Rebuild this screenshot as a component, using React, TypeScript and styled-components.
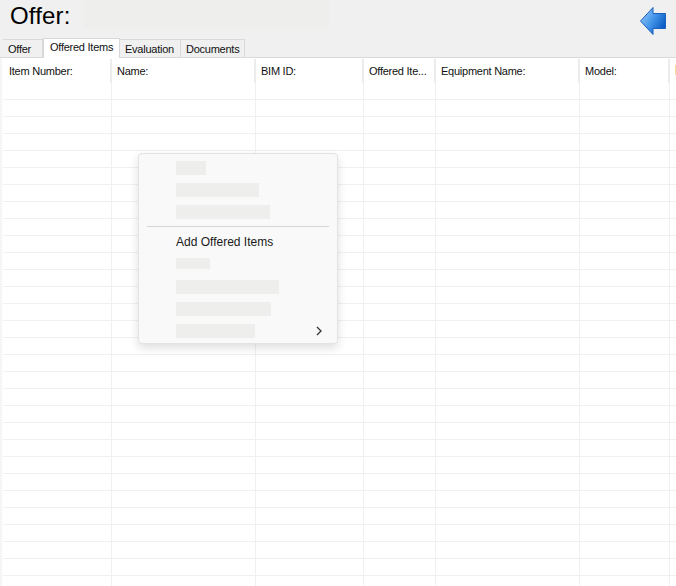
import React from "react";
import styled, { createGlobalStyle } from "styled-components";

const GlobalStyle = createGlobalStyle`
  html, body {
    margin: 0;
    padding: 0;
    background: #ffffff;
    overflow: hidden;
  }
`;

const COLUMN_WIDTHS = [109, 144, 108, 72, 144, 90, 60];
const ROW_COUNT = 30;

const columns = [
  "Item Number:",
  "Name:",
  "BIM ID:",
  "Offered Ite...",
  "Equipment Name:",
  "Model:",
];

const upperMenuItems = [
  { width: 30, height: 14, gap: 8 },
  { width: 83, height: 14, gap: 8 },
  { width: 94, height: 14, gap: 0 },
];

const lowerMenuItems = [
  { width: 34, height: 11, gap: 11 },
  { width: 103, height: 14, gap: 8 },
  { width: 95, height: 14, gap: 8 },
  { width: 79, height: 14, gap: 0, arrow: true },
];

const Page = styled.div`
  position: relative;
  width: 676px;
  height: 586px;
  overflow: hidden;
  background: #ffffff;
  font-family: "Liberation Sans", Arial, sans-serif;
`;

const Header = styled.header`
  display: flex;
  align-items: flex-start;
  justify-content: space-between;
  height: 39px;
  background: #f0f0f0;
`;

const TitleGroup = styled.div`
  display: flex;
  align-items: flex-start;
`;

const Title = styled.h1`
  margin: 0;
  width: 84px;
  padding: 2px 0 0 10px;
  box-sizing: border-box;
  font-size: 24px;
  line-height: 28px;
  font-weight: 400;
  letter-spacing: 0.15px;
  color: #000000;
`;

const RedactedTitle = styled.div`
  width: 245px;
  height: 29px;
  background: #eeeeed;
`;

const BackArrow = styled.svg`
  width: 28px;
  height: 30px;
  margin: 6px 9px 0 0;
`;

const TabStrip = styled.div`
  display: flex;
  align-items: flex-end;
  height: 18px;
  padding-left: 3px;
  background: #f0f0f0;
  border-bottom: 1px solid #dadada;
`;

const Tab = styled.div<{ $active?: boolean; $width: number }>`
  position: relative;
  z-index: ${({ $active }) => ($active ? 1 : 0)};
  width: ${({ $width }) => $width}px;
  height: ${({ $active }) => ($active ? 20 : 18)}px;
  margin-bottom: ${({ $active }) => ($active ? -1 : 0)}px;
  padding-left: ${({ $active }) => ($active ? 6 : 5)}px;
  box-sizing: border-box;
  border: 1px solid #d9d9d9;
  border-bottom: none;
  border-left-width: ${({ $active }) => ($active ? 1 : 0)}px;
  background: ${({ $active }) => ($active ? "#ffffff" : "#f0f0f0")};
  font-size: 11px;
  letter-spacing: -0.25px;
  line-height: ${({ $active }) => ($active ? 17 : 18)}px;
  color: #111111;
  white-space: nowrap;
`;

const Table = styled.div`
  padding-left: 1px;
  border-left: 2px solid #f5f5f5;
`;

const HeaderRow = styled.div`
  display: flex;
  height: 24px;
  margin-left: 1px;
  padding-top: 1px;
`;

const HeaderCell = styled.div<{ $width: number }>`
  flex: 0 0 ${({ $width }) => $width}px;
  box-sizing: border-box;
  padding: 5px 0 0 5px;
  border-right: 2px solid #ececec;
  font-size: 11px;
  letter-spacing: -0.25px;
  line-height: 14px;
  color: #111111;
  white-space: nowrap;
  overflow: hidden;
`;

const ClippedHeading = styled.div`
  width: 2px;
  height: 10px;
  margin-top: 1px;
  background: #f8dc94;
`;

const BodyRow = styled.div`
  display: flex;
  height: 17px;
  box-sizing: border-box;
  border-bottom: 1px solid #f0f0f0;
`;

const BodyCell = styled.div<{ $width: number }>`
  flex: 0 0 ${({ $width }) => $width}px;
  box-sizing: border-box;
  border-right: 1px solid #f0f0f0;
`;

const Menu = styled.div`
  position: absolute;
  left: 138px;
  top: 153px;
  width: 200px;
  height: 191px;
  padding: 7px 8px 0;
  box-sizing: border-box;
  background: #f9f9f9;
  border: 1px solid #e3e3e3;
  border-radius: 4px;
  box-shadow: 0 4px 10px rgba(0, 0, 0, 0.13);
`;

const MenuGroup = styled.div`
  display: flex;
  flex-direction: column;
`;

const MenuRow = styled.div<{ $gap: number }>`
  display: flex;
  align-items: center;
  justify-content: space-between;
  margin-bottom: ${({ $gap }) => $gap}px;
  padding-left: 29px;
`;

const Placeholder = styled.div<{ $width: number; $height: number }>`
  width: ${({ $width }) => $width}px;
  height: ${({ $height }) => $height}px;
  background: #eeeeed;
`;

const Separator = styled.div`
  height: 1px;
  margin: 7px 0 8px;
  background: #d6d6d6;
`;

const MenuLabel = styled.div`
  padding-left: 29px;
  margin-bottom: 8px;
  font-size: 12px;
  line-height: 15px;
  color: #1a1a1a;
`;

const Chevron = styled.svg`
  width: 6px;
  height: 10px;
  margin-right: 7px;
`;

export default function App() {
  return (
    <Page>
      <GlobalStyle />
      <Header>
        <TitleGroup>
          <Title>Offer:</Title>
          <RedactedTitle />
        </TitleGroup>
        <BackArrow viewBox="0 0 28 30">
          <defs>
            <linearGradient id="arrowFill" x1="0" y1="0" x2="1" y2="0.6">
              <stop offset="0" stopColor="#a5d2f8" />
              <stop offset="0.55" stopColor="#4596ea" />
              <stop offset="1" stopColor="#0d5cc4" />
            </linearGradient>
          </defs>
          <path
            d="M1.5 15 L14 1.5 V7.5 H26.5 V22.5 H14 V28.5 Z"
            fill="url(#arrowFill)"
            stroke="#1b5fc0"
            strokeWidth="1"
          />
        </BackArrow>
      </Header>
      <TabStrip>
        <Tab $width={40}>Offer</Tab>
        <Tab $width={77} $active>Offered Items</Tab>
        <Tab $width={61}>Evaluation</Tab>
        <Tab $width={64}>Documents</Tab>
      </TabStrip>
      <Table>
        <HeaderRow>
          {columns.map((name, i) => (
            <HeaderCell key={name} $width={i === 0 ? COLUMN_WIDTHS[i] - 1 : COLUMN_WIDTHS[i]}>
              {name}
            </HeaderCell>
          ))}
          <HeaderCell $width={COLUMN_WIDTHS[6]}>
            <ClippedHeading />
          </HeaderCell>
        </HeaderRow>
        {Array.from({ length: ROW_COUNT }, (_, row) => (
          <BodyRow key={row}>
            {COLUMN_WIDTHS.map((width, i) => (
              <BodyCell key={i} $width={width} />
            ))}
          </BodyRow>
        ))}
      </Table>
      <Menu>
        <MenuGroup>
          {upperMenuItems.map((item, i) => (
            <MenuRow key={i} $gap={item.gap}>
              <Placeholder $width={item.width} $height={item.height} />
            </MenuRow>
          ))}
        </MenuGroup>
        <Separator />
        <MenuLabel>Add Offered Items</MenuLabel>
        <MenuGroup>
          {lowerMenuItems.map((item, i) => (
            <MenuRow key={i} $gap={item.gap}>
              <Placeholder $width={item.width} $height={item.height} />
              {item.arrow && (
                <Chevron viewBox="0 0 6 10">
                  <path d="M1 1 L5 5 L1 9" fill="none" stroke="#333333" strokeWidth="1.3" />
                </Chevron>
              )}
            </MenuRow>
          ))}
        </MenuGroup>
      </Menu>
    </Page>
  );
}
